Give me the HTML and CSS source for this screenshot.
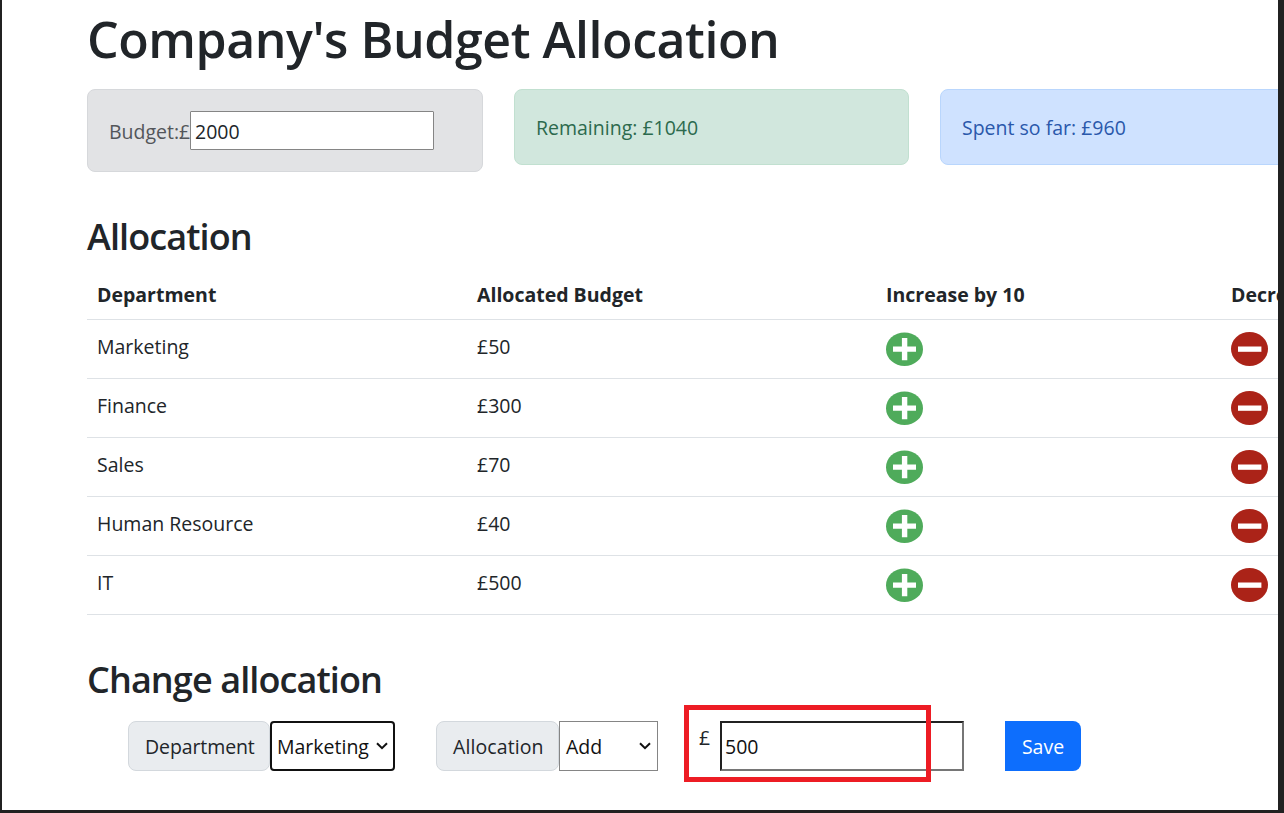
FILE: index.html
```html
<!DOCTYPE html>
<html lang="en">
<head>
<meta charset="utf-8">
<title>Company's Budget Allocation</title>
<link rel="stylesheet" href="styles.css">
</head>
<body>
<svg class="defs" width="0" height="0" aria-hidden="true">
  <symbol id="plus" viewBox="0 0 37 34"><ellipse cx="18.5" cy="17.2" rx="18.5" ry="16.8" fill="#4fab5b"/><path d="M15.9 5.9h5.4v8.5h8.7v5.4h-8.7v8.5h-5.4v-8.5H7v-5.4h8.9z" fill="#fff"/></symbol>
  <symbol id="minus" viewBox="0 0 37 34"><ellipse cx="18.5" cy="17" rx="18.5" ry="17" fill="#ab2318"/><path d="M7 14.5h23.4v5.3H7z" fill="#fff"/></symbol>
  <symbol id="chevron" viewBox="0 0 12 8"><path d="M1 1.2l5 5 5-5" fill="none" stroke="#111" stroke-width="2"/></symbol>
</svg>
<main class="page">
  <h1 class="title"><span>Company's Budget Allocation</span></h1>
  <section class="cards">
    <div class="card card-budget"><span class="budget-label">Budget:£</span><input class="budget-input" type="text" value="2000"></div>
    <div class="card card-remaining"><span>Remaining: £1040</span></div>
    <div class="card card-spent"><span>Spent so far: £960</span></div>
  </section>
  <h2 class="heading heading-table"><span>Allocation</span></h2>
  <table class="table">
    <colgroup><col class="c1"><col class="c2"><col class="c3"><col class="c3"></colgroup>
    <thead><tr><th>Department</th><th>Allocated Budget</th><th>Increase by 10</th><th>Decrease by 10</th></tr></thead>
    <tbody>
      <tr><td>Marketing</td><td>£50</td><td><svg class="icon"><use href="#plus"/></svg></td><td><svg class="icon"><use href="#minus"/></svg></td></tr>
      <tr><td>Finance</td><td>£300</td><td><svg class="icon"><use href="#plus"/></svg></td><td><svg class="icon"><use href="#minus"/></svg></td></tr>
      <tr><td>Sales</td><td>£70</td><td><svg class="icon"><use href="#plus"/></svg></td><td><svg class="icon"><use href="#minus"/></svg></td></tr>
      <tr><td>Human Resource</td><td>£40</td><td><svg class="icon"><use href="#plus"/></svg></td><td><svg class="icon"><use href="#minus"/></svg></td></tr>
      <tr><td>IT</td><td>£500</td><td><svg class="icon"><use href="#plus"/></svg></td><td><svg class="icon"><use href="#minus"/></svg></td></tr>
    </tbody>
  </table>
  <h2 class="heading heading-form"><span>Change allocation</span></h2>
  <form class="controls">
    <div class="group">
      <label class="addon addon-dept">Department</label>
      <div class="picker picker-dept"><span>Marketing</span><svg class="chevron"><use href="#chevron"/></svg></div>
    </div>
    <div class="group group-action">
      <label class="addon addon-alloc">Allocation</label>
      <div class="picker picker-action"><span>Add</span><svg class="chevron"><use href="#chevron"/></svg></div>
    </div>
    <div class="group group-amount">
      <span class="currency">£</span>
      <input class="amount" type="text" value="500">
      <div class="highlight"></div>
    </div>
    <button class="save" type="button">Save</button>
  </form>
</main>
</body>
</html>
```
FILE: styles.css
```css
* { box-sizing: border-box; }
html, body { margin: 0; height: 100%; overflow: hidden; }
body {
  font-family: "Open Sans", "Noto Sans", sans-serif;
  font-size: 19.5px;
  line-height: 31px;
  color: #212529;
  background: #fff;
}
.defs { position: absolute; }
.page {
  height: 813px;
  padding: 8px 0 0 85px;
  border: solid #212121;
  border-width: 0 6px 3px 2px;
  overflow: hidden;
}
.title { margin: 0 0 19px; font-size: 50px; line-height: 62px; font-weight: 600; letter-spacing: -0.45px; white-space: nowrap; }
.cards { display: grid; grid-template-columns: 396px 395px 395px; column-gap: 31px; width: 1248px; height: 83px; align-items: start; }
.card { height: 76px; padding: 22px 21px; border: 1px solid; border-radius: 8px; white-space: nowrap; }
.card-budget { display: flex; align-items: center; height: 83px; color: #53565a; background: #e2e3e5; border-color: #d6d8db; }
.card-remaining { color: #2c6a4d; background: #d1e7dd; border-color: #c1e0d0; }
.card-spent { color: #2a58ab; background: #cfe2ff; border-color: #b9d6fd; }
.budget-label { width: 81px; padding-top: 2px; flex: none; }
.budget-input { width: 244px; height: 39px; padding: 2px 4px 0; border: 1px solid #858585; border-radius: 1px; font: inherit; color: #212529; background: #fff; }
.heading { margin: 0; font-size: 36px; line-height: 46px; font-weight: 600; letter-spacing: -0.9px; }
.heading-table { margin-top: 42px; margin-bottom: 8px; }
.heading-form { margin-top: 42px; margin-bottom: 18px; }
.table { width: 1479px; table-layout: fixed; border-collapse: separate; border-spacing: 0; }
.c1 { width: 380px; }
.c2 { width: 409px; }
.c3 { width: 345px; }
th, td { padding: 11px 10px 9px; border-bottom: 1px solid #dee2e6; text-align: left; vertical-align: top; }
th { height: 52px; font-weight: 700; }
td { height: 59px; padding-bottom: 0; }
.icon { display: block; width: 37px; height: 34px; margin-top: 1px; }
.controls { display: flex; margin-left: 41px; height: 50px; }
.group { display: flex; height: 50px; }
.group-action { margin-left: 41px; }
.group-amount { position: relative; margin-left: 41px; }
.addon { padding-left: 16px; line-height: 49px; background: #e9ecef; border: 1px solid #d3d8dd; border-radius: 8px; }
.addon-dept { width: 142px; letter-spacing: -0.1px; }
.addon-alloc { width: 123px; letter-spacing: 0.1px; }
.picker { display: flex; align-items: center; justify-content: space-between; padding: 0 6px; border: 1px solid #858585; background: #fff; color: #111; }
.picker-dept { width: 125px; padding: 0 5px; border: 2px solid #111; border-radius: 4px; }
.picker-action { width: 99px; }
.chevron { flex: none; width: 12px; height: 8px; }
.currency { width: 21px; padding-top: 1px; }
.amount { width: 244px; height: 50px; padding: 2px 3px; border: 2px solid; border-color: #212121 #767676 #767676 #212121; font: inherit; color: #111; }
.highlight { position: absolute; left: -15px; top: -16px; width: 247px; height: 77px; border: 5px solid #ed1c24; }
.save { width: 76px; height: 50px; margin-left: 41px; padding: 0; border: 0; border-radius: 0 8px 8px 0; background: #0d6efd; color: #fff; font: inherit; }
```
